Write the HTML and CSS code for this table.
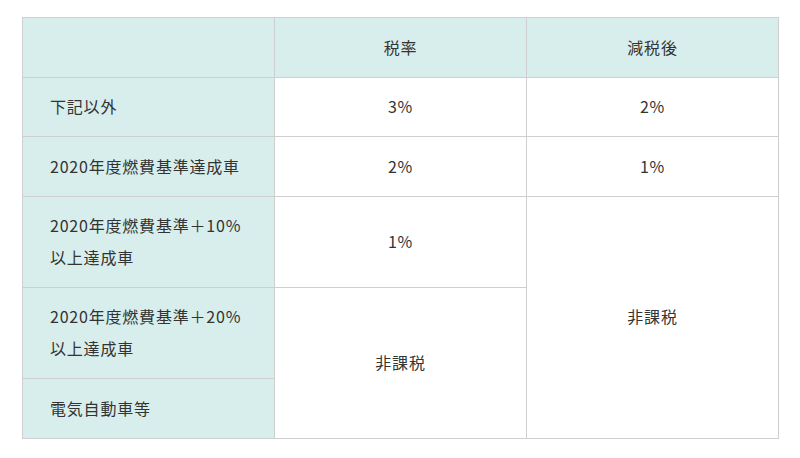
FILE: index.html
```html
<!DOCTYPE html>
<html lang="ja">
<head>
<meta charset="utf-8">
<link rel="stylesheet" href="styles.css">
</head>
<body>
<div class="wrap">
<table class="tax">
  <thead>
    <tr><th class="corner"></th><th>税率</th><th>減税後</th></tr>
  </thead>
  <tbody>
    <tr><th>下記以外</th><td>3%</td><td>2%</td></tr>
    <tr><th>2020年度燃費基準達成車</th><td>2%</td><td>1%</td></tr>
    <tr class="two"><th>2020年度燃費基準＋10%以上達成車</th><td>1%</td><td rowspan="3">非課税</td></tr>
    <tr class="two"><th>2020年度燃費基準＋20%以上達成車</th><td rowspan="2">非課税</td></tr>
    <tr><th>電気自動車等</th></tr>
  </tbody>
</table>
</div>
</body>
</html>
```
FILE: styles.css
```css
html, body {
  margin: 0;
  padding: 0;
  background: #ffffff;
}
.wrap {
  padding: 17px 22px 0 22px;
}
.tax {
  border-collapse: collapse;
  width: 757px;
  table-layout: fixed;
  font-family: "Noto Sans CJK JP", "Noto Sans", sans-serif;
  font-size: 16px;
  letter-spacing: 0.05em;
  color: #333333;
  line-height: 31.6px;
}
.tax th, .tax td {
  border: 1px solid #cfcfcf;
  padding: 13.5px 27px;
  font-weight: normal;
  vertical-align: middle;
}
.tax thead th {
  background: #d8eeec;
  text-align: center;
}
.tax tbody th {
  background: #d8eeec;
  text-align: left;
}
.tax td {
  background: #ffffff;
  text-align: center;
}
```
